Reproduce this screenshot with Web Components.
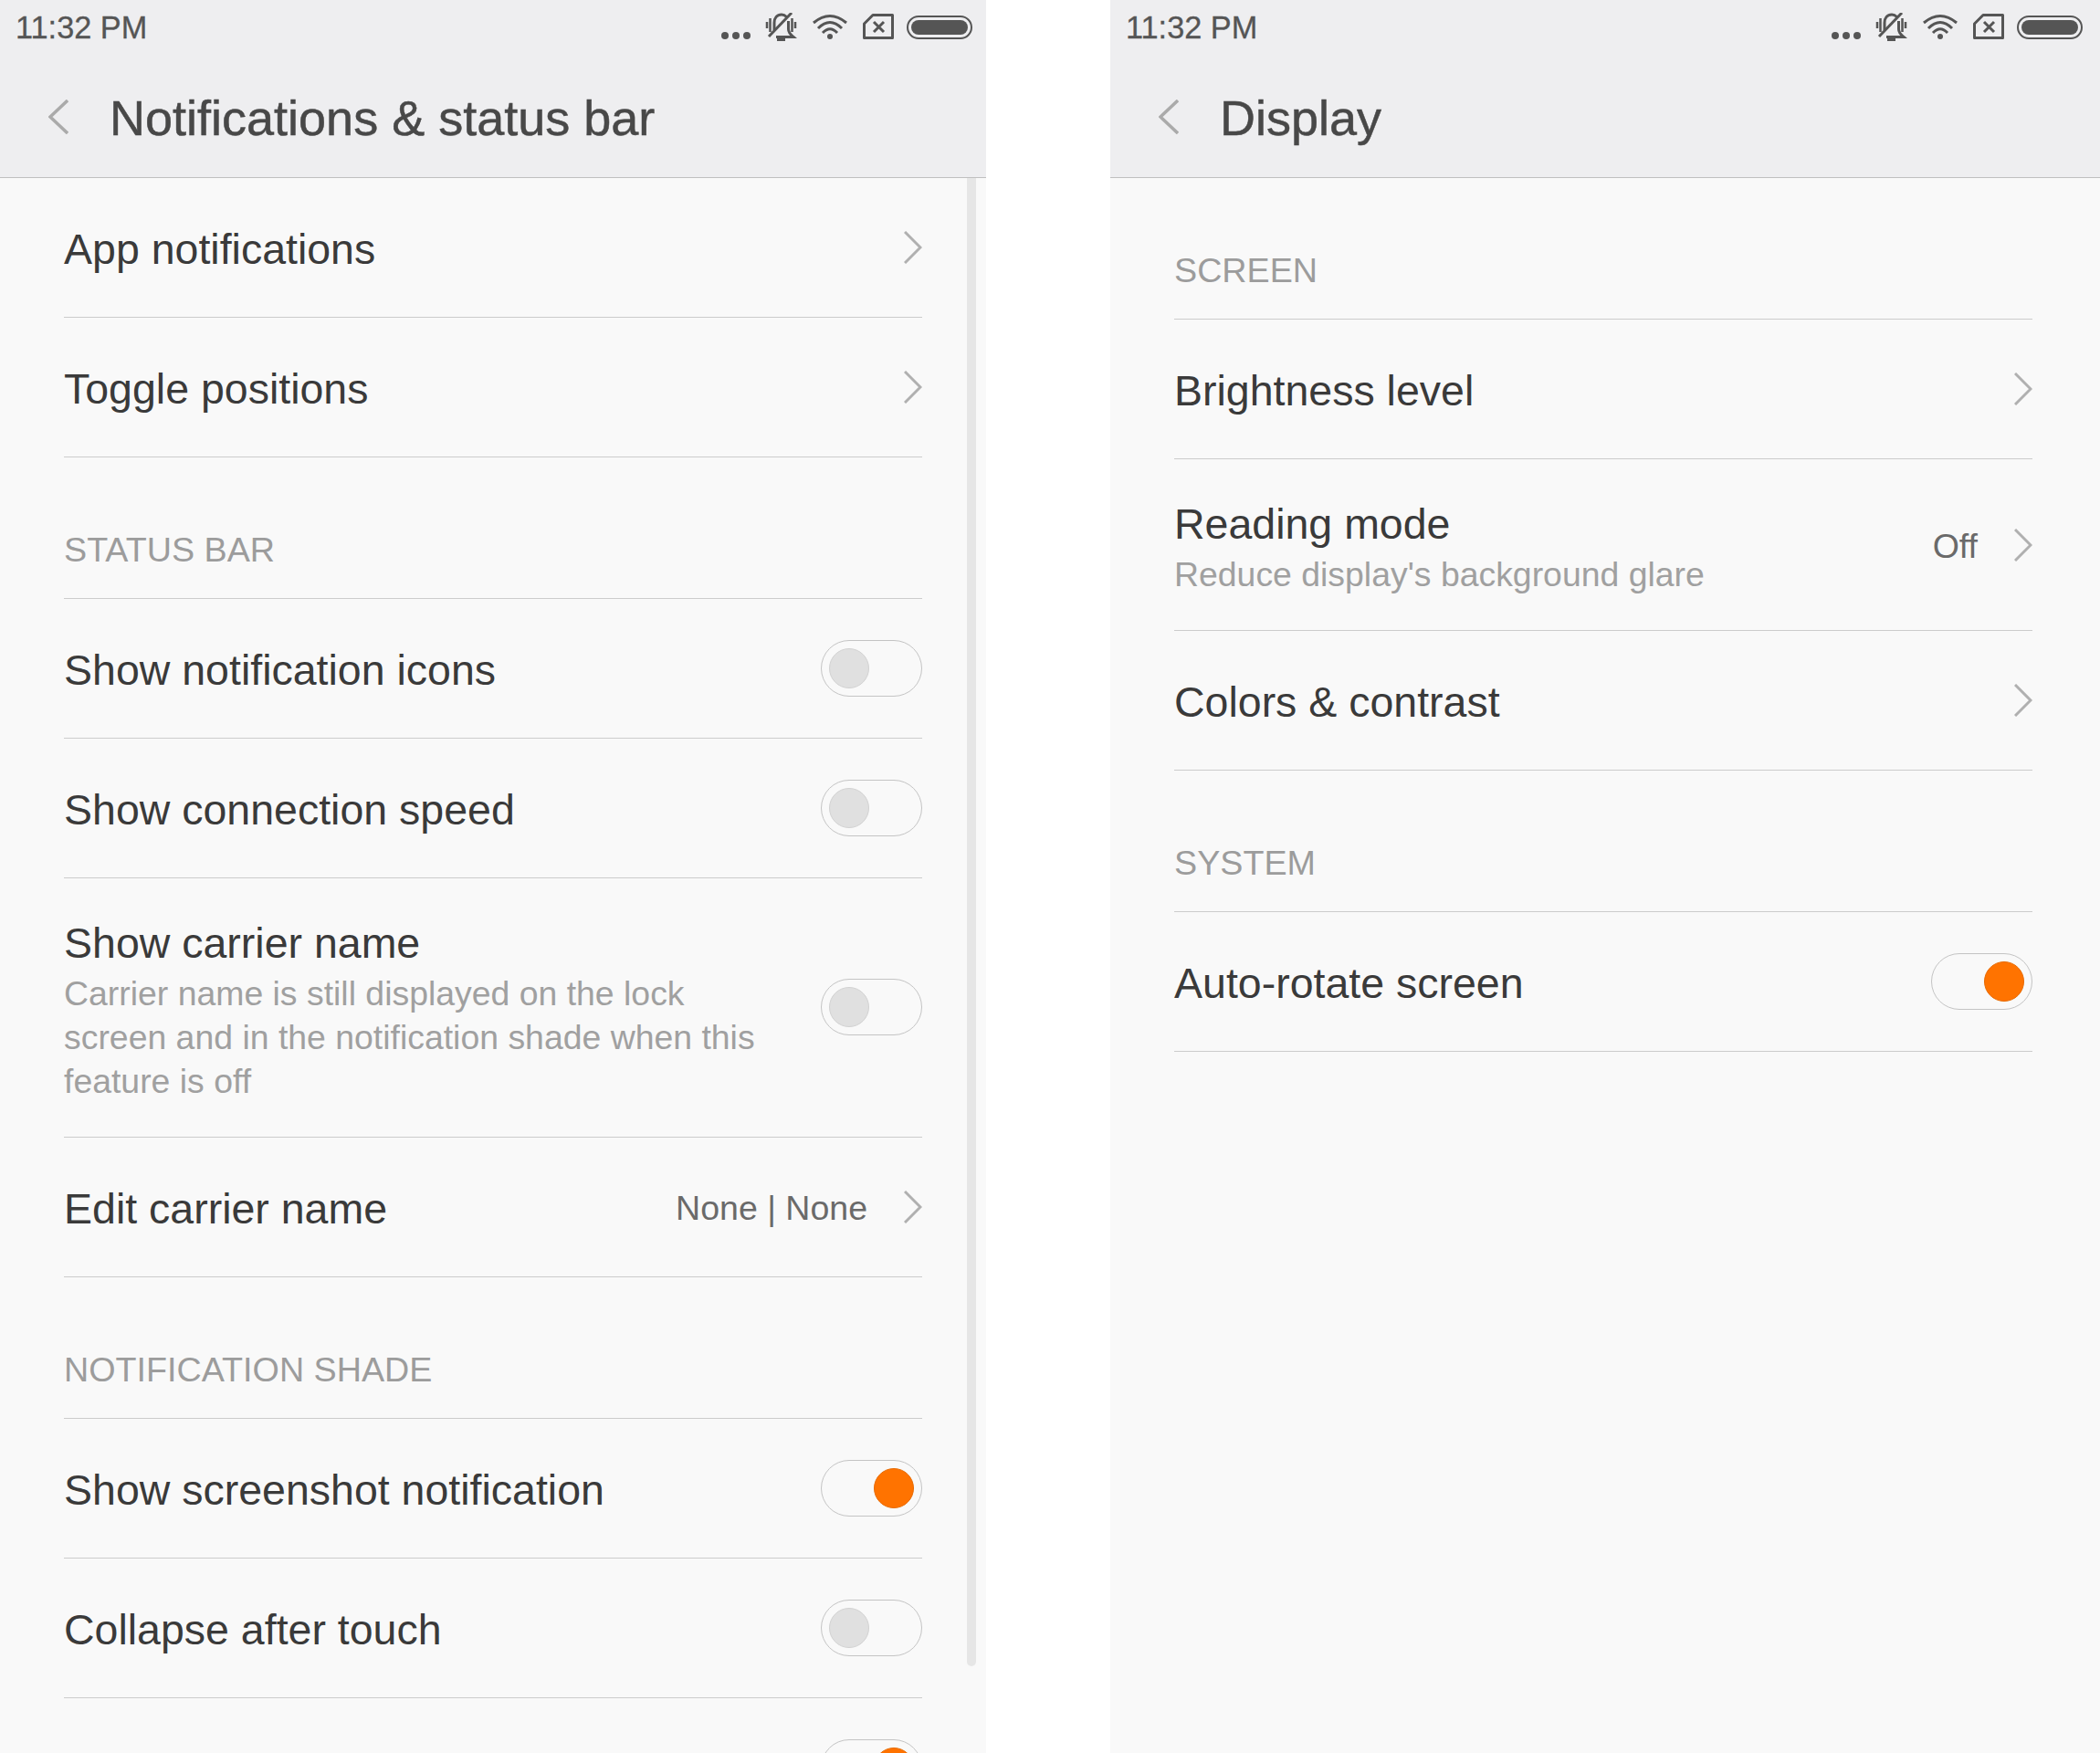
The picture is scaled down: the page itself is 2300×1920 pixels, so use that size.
<!DOCTYPE html>
<html>
<head>
<meta charset="utf-8">
<style>
  html, body { margin: 0; height: 1920px; overflow: hidden; background: #fff; }
  body {
    font-family: "Liberation Sans", Arial, sans-serif;
    display: grid;
    grid-template-columns: 1080px 136px 1084px;
  }
</style>
</head>
<body>
<settings-panel heading="Notifications &amp; status bar" scrollbar>
  <setting-row label="App notifications" chevron></setting-row>
  <setting-row label="Toggle positions" chevron></setting-row>
  <section-label>STATUS BAR</section-label>
  <setting-row label="Show notification icons" toggle="off"></setting-row>
  <setting-row label="Show connection speed" toggle="off"></setting-row>
  <setting-row label="Show carrier name" toggle="off">Carrier name is still displayed on the lock<br>screen and in the notification shade when this<br>feature is off</setting-row>
  <setting-row label="Edit carrier name" value="None | None" chevron></setting-row>
  <section-label>NOTIFICATION SHADE</section-label>
  <setting-row label="Show screenshot notification" toggle="on"></setting-row>
  <setting-row label="Collapse after touch" toggle="off"></setting-row>
  <setting-row label="" toggle="on"></setting-row>
</settings-panel>
<div></div>
<settings-panel heading="Display">
  <section-label>SCREEN</section-label>
  <setting-row label="Brightness level" chevron></setting-row>
  <setting-row label="Reading mode" value="Off" chevron>Reduce display's background glare</setting-row>
  <setting-row label="Colors &amp; contrast" chevron></setting-row>
  <section-label>SYSTEM</section-label>
  <setting-row label="Auto-rotate screen" toggle="on"></setting-row>
</settings-panel>

<script>
class StatusBar extends HTMLElement {
  constructor() {
    super();
    this.attachShadow({ mode: "open" });
    this.shadowRoot.innerHTML = `
      <style>
        :host {
          display: flex;
          align-items: flex-start;
          box-sizing: border-box;
          height: 60px;
          padding: 0 calc(100% - 1065px) 0 17px;
          color: #555;
          font-size: 34.300px;
        }
        .time { margin-top: 11px; line-height: 38px; margin-right: auto; -webkit-text-stroke: .3px #555; }
        svg { display: block; flex: none; fill: none; stroke: #555; }
        .dots { margin-top: 35px; }
        .bell { margin: 14px 0 0 16px; }
        .wifi { margin: 15px 0 0 17px; }
        .sim { margin: 15px 0 0 17px; }
        .battery { margin: 17px 0 0 14px; }
      </style>
      <span class="time">11:32 PM</span>
      <svg class="dots" width="32" height="8" viewBox="0 0 32 8"><g fill="#555" stroke="none"><circle cx="4" cy="4" r="4"/><circle cx="16" cy="4" r="4"/><circle cx="28" cy="4" r="4"/></g></svg>
      <svg class="bell" width="35" height="32" viewBox="0 0 35 32" stroke-width="3">
        <path d="M29 0 4 26"/>
        <path d="M10 19V11C10 5.500 13 2 18 2 20.500 2 22 3 23.500 4.500M25.500 9V18C25.500 22 28 24 31 26.500H12"/>
        <path d="M13 29.500H22"/>
        <path d="M2 10V17M5.500 6V21M29.500 6V21M33 10V17" stroke-width="2.500"/>
      </svg>
      <svg class="wifi" width="38" height="28" viewBox="0 0 38 28" stroke-width="3">
        <path d="M1 10Q19-5 37 10"/>
        <path d="M6 16Q19 3 32 16"/>
        <path d="M11 21Q19 12.500 27 21"/>
        <circle cx="19" cy="25" r="3" fill="#555" stroke="none"/>
      </svg>
      <svg class="sim" width="34" height="28" viewBox="0 0 34 28" stroke-width="3">
        <path d="M11 1.500H32.500V26.500H1.500V11Z" stroke-linejoin="round"/>
        <path d="M12 9 23 20M23 9 12 20"/>
      </svg>
      <svg class="battery" width="72" height="26" viewBox="0 0 72 26">
        <rect x="1" y="1" width="70" height="24" rx="12" stroke-width="2"/>
        <rect x="5" y="5" width="62" height="16" rx="8" fill="#555" stroke="none"/>
      </svg>`;
  }
}

class SettingsPanel extends HTMLElement {
  constructor() {
    super();
    this.attachShadow({ mode: "open" });
  }

  connectedCallback() {
    this.render();
  }

  render() {
    const heading = this.getAttribute("heading");
    const bar = this.hasAttribute("scrollbar") ? `<div class="scrollbar"></div>` : ``;
    this.shadowRoot.innerHTML = `
      <style>
        :host {
          display: flex;
          flex-direction: column;
          position: relative;
          height: 1920px;
          overflow: hidden;
          background: #f9f9f9;
        }
        header {
          flex: none;
          height: 195px;
          box-sizing: border-box;
          background: #eeeef0;
          border-bottom: 1px solid #bfbfbf;
        }
        .title {
          display: flex;
          align-items: center;
          height: 74px;
          padding-left: 53px;
          margin-top: 31px;
        }
        .title svg { flex: none; }
        h1 {
          margin: 2px 0 0 45px;
          font-weight: normal;
          font-size: 54px;
          line-height: 60px;
          color: #484848;
          -webkit-text-stroke: .5px #484848;
        }
        main { padding: 0 calc(100% - 1010px) 0 70px; }
        .scrollbar {
          position: absolute;
          left: 1059px;
          top: 195px;
          width: 10px;
          height: 1630px;
          border-radius: 0 0 5px 5px;
          background: #e6e6e6;
        }
      </style>
      <header>
        <status-bar></status-bar>
        <div class="title">
          <svg width="22" height="38" viewBox="0 0 22 38" fill="none" stroke="#aaa" stroke-width="3.500"><path d="M21 1 2 19 21 37"/></svg>
          <h1>${heading}</h1>
        </div>
      </header>
      <main><slot></slot></main>
      ${bar}`;
  }
}

class SectionLabel extends HTMLElement {
  constructor() {
    super();
    this.attachShadow({ mode: "open" });
    this.shadowRoot.innerHTML = `
      <style>
        :host {
          display: flex;
          align-items: flex-end;
          box-sizing: border-box;
          height: 155px;
          padding-bottom: 31px;
          border-bottom: 1px solid #ccc;
          color: #9c9c9c;
          font-size: 37.700px;
          line-height: 44px;
        }
      </style>
      <slot></slot>`;
  }
}

class SettingRow extends HTMLElement {
  constructor() {
    super();
    this.attachShadow({ mode: "open" });
  }

  connectedCallback() {
    this.render();
  }

  render() {
    const label = this.getAttribute("label");
    const value = this.getAttribute("value");
    const toggle = this.getAttribute("toggle");
    const chevron = this.hasAttribute("chevron");
    const hasSub = this.childNodes.length > 0;
    this.shadowRoot.innerHTML = `
      <style>
        :host {
          display: flex;
          align-items: center;
          box-sizing: border-box;
          min-height: 153px;
          padding: ${hasSub ? "42px 0 41px" : "0"};
          border-bottom: 1px solid #ccc;
        }
        .text { flex: 1; min-width: 0; margin-top: ${hasSub ? "0" : "4px"}; }
        .label { font-size: 46.500px; line-height: 56px; color: #3a3a3a; margin-top: ${hasSub ? "1px" : "0"}; }
        .sub { font-size: 37.400px; line-height: 48px; color: #a0a0a0; margin: 3px 0 -4px; }
        .value { font-size: 37.500px; color: #6a6a6a; margin: 2px 40px 0 0; }
        svg { flex: none; }
        toggle-switch { margin-bottom: ${hasSub ? "2px" : "0"}; }
      </style>
      <div class="text">
        <div class="label">${label}</div>
        ${hasSub ? `<div class="sub"><slot></slot></div>` : ``}
      </div>
      ${value ? `<span class="value">${value}</span>` : ``}
      ${chevron ? `<svg width="20" height="36" viewBox="0 0 20 36" fill="none" stroke="#b0b0b0" stroke-width="3"><path d="M1 1 18 18 1 35"/></svg>` : ``}
      ${toggle ? `<toggle-switch state="${toggle}"></toggle-switch>` : ``}`;
  }
}

class ToggleSwitch extends HTMLElement {
  constructor() {
    super();
    this.attachShadow({ mode: "open" });
  }

  connectedCallback() {
    const on = this.getAttribute("state") === "on";
    this.shadowRoot.innerHTML = `
      <style>
        :host {
          display: flex;
          flex: none;
          justify-content: ${on ? "flex-end" : "flex-start"};
          align-items: center;
          box-sizing: border-box;
          width: 111px;
          height: 62px;
          padding: 0 8px;
          border: 1px solid #c4c4c4;
          border-radius: 31px;
        }
        .knob {
          box-sizing: border-box;
          width: 44px;
          height: 44px;
          border-radius: 50%;
          background: ${on ? "#ff7300" : "#e0e0e0"};
          border: 1px solid ${on ? "#e86a00" : "#d2d2d2"};
        }
      </style>
      <div class="knob"></div>`;
  }
}

customElements.define("status-bar", StatusBar);
customElements.define("settings-panel", SettingsPanel);
customElements.define("section-label", SectionLabel);
customElements.define("setting-row", SettingRow);
customElements.define("toggle-switch", ToggleSwitch);
</script>
</body>
</html>
